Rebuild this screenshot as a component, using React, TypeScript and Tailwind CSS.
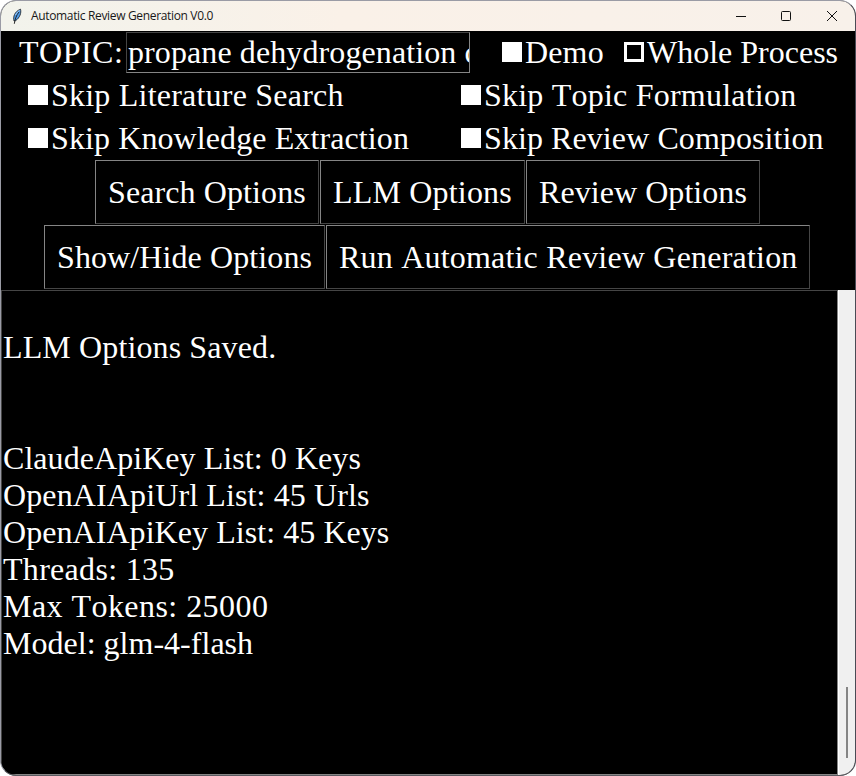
import React from "react";

function Check({ label, outlined = false, className = "" }: { label: string; outlined?: boolean; className?: string }) {
  return (
    <label className={`flex items-center whitespace-nowrap ${className}`}>
      <span className={`mr-[3px] mb-px size-5 shrink-0 border-white ${outlined ? "border-[3px] bg-black" : "bg-white"}`} />
      <span>{label}</span>
    </label>
  );
}

function Button({ label, className }: { label: string; className: string }) {
  return (
    <button
      className={`flex h-16 shrink-0 items-center whitespace-nowrap border border-t-[#858585] border-l-[#858585] border-r-[#454545] border-b-[#454545] pl-3 text-left ${className}`}
    >
      {label}
    </button>
  );
}

function Feather() {
  return (
    <svg className="ml-[11px] h-[17px] w-[10px]" viewBox="0 0 10 17">
      <path d="M2 13C.8 9 2.500 3.500 8.500 1.200c1 3.500-.5 8.500-5 11.500z" fill="#4f9be8" stroke="#1a1a1a" strokeWidth="0.8" />
      <path d="M7 4C4.500 7 3 11 2.300 15.800" fill="none" stroke="#161616" strokeWidth="0.9" />
      <path d="M3.500 7C4.500 5 6 3.500 7.500 2.500" fill="none" stroke="#a9d4ff" strokeWidth="0.9" />
    </svg>
  );
}

const log = [
  { text: "", cls: "" },
  { text: "LLM Options Saved.", cls: "tracking-[0.12px]" },
  { text: "", cls: "" },
  { text: "", cls: "" },
  { text: "ClaudeApiKey List: 0 Keys", cls: "tracking-[0.06px]" },
  { text: "OpenAIApiUrl List: 45 Urls", cls: "tracking-[0.12px]" },
  { text: "OpenAIApiKey List: 45 Keys", cls: "tracking-[0.06px]" },
  { text: "Threads: 135", cls: "tracking-[0.3px]" },
  { text: "Max Tokens: 25000", cls: "tracking-[0.45px]" },
  { text: "Model: glm-4-flash", cls: "tracking-[0.02px]" },
];

export default function App() {
  return (
    <div className="h-[776px] w-[856px] overflow-hidden bg-white">
      <div className="flex h-[776px] w-[856px] flex-col overflow-hidden rounded-[16px] border border-[#9a9ba5] border-r-[#4a4b55] border-b-[#5b5b61] bg-black font-['Liberation_Serif',serif] text-[32px] leading-[37px] text-white [font-kerning:none]">
        <header className="flex h-[30px] shrink-0 items-center bg-linear-to-r from-[#f2f3ec] via-[#faf1e8] via-40% to-[#f8f1ea] font-['Open_Sans',sans-serif] text-[12px] leading-4 text-[#181818]">
          <Feather />
          <span className="ml-[9px] flex-1 whitespace-nowrap tracking-[-0.34px]">Automatic Review Generation V0.0</span>
          <svg className="mr-[16px] h-3 w-[103px]" viewBox="0 0 103 12" fill="none" stroke="#111" strokeWidth="1">
            <path d="M0 6.500h10" />
            <rect x="45.500" y="1.500" width="9" height="9" rx="1" />
            <path d="M91 1l10 10M101 1L91 11" />
          </svg>
        </header>

        <div className="flex h-[43px] shrink-0 items-center pl-[18px]">
          <span className="w-[107px] tracking-[0.5px]">TOPIC:</span>
          <input
            className="h-[41px] w-[344px] shrink-0 border border-t-[#454545] border-l-[#454545] border-r-[#858585] border-b-[#858585] bg-black pl-px leading-[39px] tracking-[0.1px] outline-none [font-kerning:none]"
            defaultValue="propane dehydrogenation catalyst"
          />
          <Check label="Demo" className="ml-8 w-[122px] tracking-[0.15px]" />
          <Check label="Whole Process" outlined className="tracking-[0px]" />
        </div>
        <div className="flex h-[43px] shrink-0 items-center pl-[27px]">
          <Check label="Skip Literature Search" className="w-[433px] tracking-[0.22px]" />
          <Check label="Skip Topic Formulation" className="tracking-[0.22px]" />
        </div>
        <div className="flex h-[43px] shrink-0 items-center pl-[27px]">
          <Check label="Skip Knowledge Extraction" className="w-[433px] tracking-[0.1px]" />
          <Check label="Skip Review Composition" className="tracking-[0.08px]" />
        </div>

        <div className="flex h-[65px] shrink-0 gap-px pl-[94px]">
          <Button label="Search Options" className="w-[224px] tracking-[0.1px]" />
          <Button label="LLM Options" className="w-[205px] tracking-[0.18px]" />
          <Button label="Review Options" className="w-[234px] tracking-[0.06px]" />
        </div>
        <div className="flex h-[65px] shrink-0 gap-px pl-[43px]">
          <Button label="Show/Hide Options" className="w-[281px] tracking-[0.1px]" />
          <Button label="Run Automatic Review Generation" className="w-[484px] tracking-[0.2px]" />
        </div>

        <div className="flex min-h-0 flex-1">
          <div className="flex-1 border border-t-[#454545] border-l-[#454545] border-r-[#858585] border-b-[#858585] pt-px pl-px">
            {log.map((line, i) => (
              <div key={i} className={`h-[37px] whitespace-nowrap ${line.cls}`}>{line.text}</div>
            ))}
          </div>
          <div className="flex w-[17px] items-end justify-center border-l border-white bg-[#f0f0f0] pb-[17px]">
            <div className="h-[71px] w-0.5 bg-[#858585]" />
          </div>
        </div>
      </div>
    </div>
  );
}
